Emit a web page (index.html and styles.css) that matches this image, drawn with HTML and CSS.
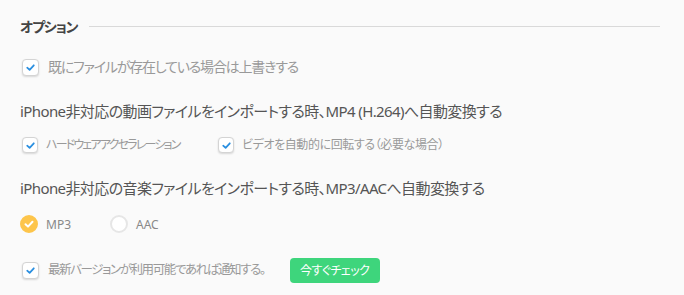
FILE: index.html
```html
<!DOCTYPE html>
<html lang="ja">
<head>
    <meta charset="UTF-8">
    <title>オプション</title>
    <link rel="stylesheet" href="styles.css">
</head>
<body>
    <div class="options">
        <div class="section-title">
            <span>オプション</span>
            <div class="rule"></div>
        </div>

        <label class="check-row overwrite">
            <span class="check"><svg viewBox="0 0 10 10"><path d="M2 5.2 L4.2 7.2 L8 3"/></svg></span>
            <span class="check-label">既にファイルが存在している場合は上書きする</span>
        </label>

        <h2 class="option-heading">iPhone非対応の動画ファイルをインポートする時、MP4 (H.264)へ自動変換する</h2>
        <div class="inline-row">
            <label class="check-row small">
                <span class="check"><svg viewBox="0 0 10 10"><path d="M2 5.2 L4.2 7.2 L8 3"/></svg></span>
                <span class="check-label hw">ハードウェアアクセラレーション</span>
            </label>
            <label class="check-row small">
                <span class="check"><svg viewBox="0 0 10 10"><path d="M2 5.2 L4.2 7.2 L8 3"/></svg></span>
                <span class="check-label">ビデオを自動的に回転する（必要な場合）</span>
            </label>
        </div>

        <h2 class="option-heading second">iPhone非対応の音楽ファイルをインポートする時、MP3/AACへ自動変換する</h2>
        <div class="inline-row radios">
            <label class="radio-row">
                <span class="radio selected"><svg viewBox="0 0 14 14"><path d="M3.5 7.2 L6 9.6 L10.5 4.8"/></svg></span>
                <span class="radio-label">MP3</span>
            </label>
            <label class="radio-row">
                <span class="radio"></span>
                <span class="radio-label">AAC</span>
            </label>
        </div>

        <div class="update-row">
            <label class="check-row">
                <span class="check"><svg viewBox="0 0 10 10"><path d="M2 5.2 L4.2 7.2 L8 3"/></svg></span>
                <span class="check-label">最新バージョンが利用可能であれば通知する。</span>
            </label>
            <button class="check-now">今すぐチェック</button>
        </div>
    </div>
</body>
</html>
```

FILE: styles.css
```css
body {
    margin: 0;
    background-color: #fafafa;
    font-family: "Noto Sans", "Noto Sans CJK JP", sans-serif;
    font-feature-settings: "palt";
    color: #555;
}
.options {
    padding: 13px 24px 0 20px;
}
.section-title {
    display: flex;
    align-items: center;
    height: 26px;
    font-size: 14px;
    font-weight: bold;
    letter-spacing: -1.2px;
    color: #444;
}
.section-title .rule {
    flex: 1;
    height: 1px;
    background-color: #d9d9d9;
    margin-left: 12px;
}
.check-row {
    display: flex;
    align-items: center;
    height: 20px;
    white-space: nowrap;
}
.check {
    width: 15px;
    height: 15px;
    border: 1px solid #d4d4d4;
    border-radius: 4px;
    background-color: #fff;
    box-shadow: 0 1px 2px rgba(0, 0, 0, 0.14);
    display: flex;
    align-items: center;
    justify-content: center;
    flex-shrink: 0;
}
.check svg {
    width: 11px;
    height: 11px;
}
.check svg path {
    fill: none;
    stroke: #2a8fe0;
    stroke-width: 1.6;
    stroke-linecap: round;
    stroke-linejoin: round;
}
.check-label {
    margin-left: 9px;
    font-size: 14px;
    line-height: 20px;
    letter-spacing: -1.2px;
    color: #999;
}
.overwrite {
    margin: 18px 0 0 2px;
}
.option-heading {
    margin: 24px 0 0 0;
    font-size: 15px;
    line-height: 20px;
    font-weight: normal;
    letter-spacing: -0.6px;
    color: #555;
    white-space: nowrap;
}
.option-heading.second {
    margin-top: 23px;
}
.inline-row {
    display: flex;
    margin: 14px 0 0 2px;
}
.check-row.small {
    width: 196px;
}
.check-row.small .check {
    width: 14px;
    height: 14px;
}
.check-row.small .check-label {
    font-size: 12px;
    margin-left: 8px;
    letter-spacing: -0.4px;
}
.check-row.small .check-label.hw {
    letter-spacing: -1.8px;
}
.radios {
    margin: 16px 0 0 0;
}
.radio-row {
    display: flex;
    align-items: center;
    height: 20px;
    width: 90px;
}
.radio {
    width: 14px;
    height: 14px;
    border: 2px solid #e6e6e6;
    border-radius: 50%;
    background-color: #fff;
    display: flex;
}
.radio.selected {
    border-color: #fdc54b;
    background-color: #fdc54b;
}
.radio svg {
    width: 14px;
    height: 14px;
}
.radio svg path {
    fill: none;
    stroke: #fff;
    stroke-width: 2;
    stroke-linecap: round;
    stroke-linejoin: round;
}
.radio-label {
    margin-left: 8px;
    font-size: 12px;
    color: #888;
}
.update-row {
    display: flex;
    align-items: center;
    height: 26px;
    margin: 23px 0 0 2px;
}
.update-row .check-label {
    font-size: 12.5px;
    letter-spacing: -1.4px;
}
.check-now {
    margin-left: 25px;
    width: 90px;
    height: 25px;
    border: none;
    border-radius: 4px;
    background-color: #3ed57c;
    color: #fff;
    font-family: "Noto Sans", "Noto Sans CJK JP", sans-serif;
    font-feature-settings: "palt";
    font-size: 12px;
    letter-spacing: -0.5px;
}
```
